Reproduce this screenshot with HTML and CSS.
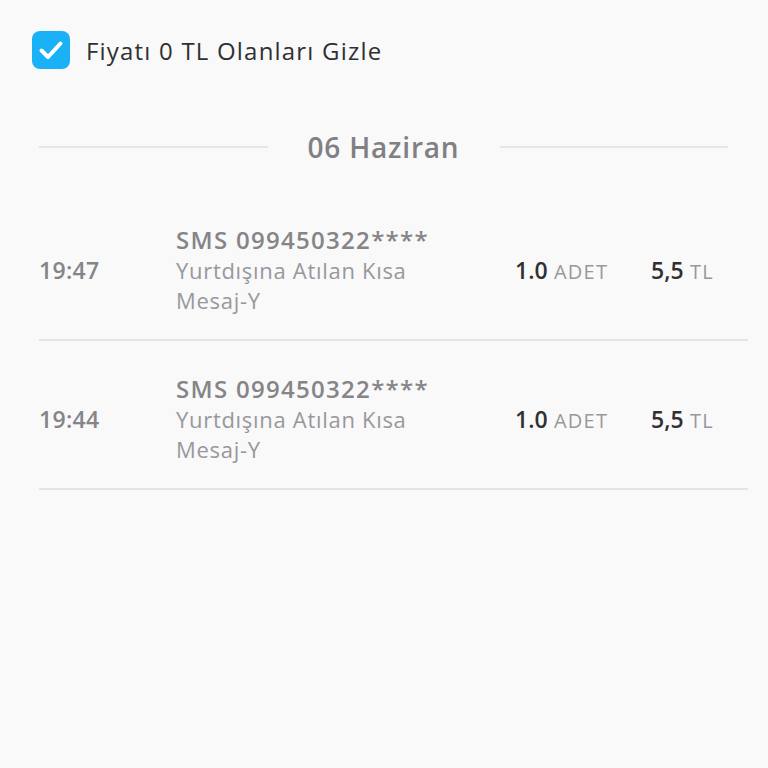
FILE: index.html
```html
<!DOCTYPE html>
<html lang="tr">
<head>
<meta charset="utf-8">
<link rel="stylesheet" href="styles.css">
</head>
<body>
<div class="page">
  <label class="filter">
    <span class="checkbox">
      <svg width="38" height="38" viewBox="0 0 38 38"><rect x="0" y="0" width="38" height="38" rx="8" fill="#1bb1f6"/><path d="M9.5 19.5 L16 26 L28.5 12.5" fill="none" stroke="#fff" stroke-width="4" stroke-linecap="round" stroke-linejoin="round"/></svg>
    </span>
    <span class="filter-text">Fiyatı 0 TL Olanları Gizle</span>
  </label>

  <div class="date-sep">
    <span class="line"></span>
    <span class="date">06 Haziran</span>
    <span class="line"></span>
  </div>

  <div class="list">
    <div class="row">
      <div class="time">19:47</div>
      <div class="desc">
        <div class="title">SMS 099450322****</div>
        <div class="sub">Yurtdışına Atılan Kısa Mesaj-Y</div>
      </div>
      <div class="qty"><b>1.0</b> ADET</div>
      <div class="price"><b>5,5</b> TL</div>
    </div>
    <div class="row">
      <div class="time">19:44</div>
      <div class="desc">
        <div class="title">SMS 099450322****</div>
        <div class="sub">Yurtdışına Atılan Kısa Mesaj-Y</div>
      </div>
      <div class="qty"><b>1.0</b> ADET</div>
      <div class="price"><b>5,5</b> TL</div>
    </div>
  </div>
</div>
</body>
</html>
```

FILE: styles.css
```css
html, body {
  margin: 0;
  padding: 0;
  background: #f9f9fa;
}
body {
  font-family: "Open Sans", "Noto Sans", sans-serif;
  width: 768px;
  height: 768px;
  overflow: hidden;
}
.page {
  padding: 31px 20px 0 39px;
}
.filter {
  display: flex;
  align-items: center;
  gap: 16px;
  margin-left: -7px;
  height: 38px;
}
.checkbox {
  display: block;
  width: 38px;
  height: 38px;
}
.checkbox svg { display: block; }
.filter-text {
  font-size: 24px;
  color: #2f3033;
  letter-spacing: 1.2px;
}
.date-sep {
  display: flex;
  align-items: center;
  margin-top: 58px;
  width: 689px;
  height: 40px;
}
.date-sep .line {
  flex: 1;
  height: 2px;
  background: #e6e6e8;
}
.date-sep .date {
  width: 232px;
  text-align: center;
  font-size: 28px;
  font-weight: 600;
  color: #808083;
  letter-spacing: 0.8px;
}
.list {
  margin-top: 25px;
  width: 709px;
}
.row {
  display: grid;
  grid-template-columns: 137px 339px 136px auto;
  align-items: center;
  padding: 32px 0 24px;
  border-bottom: 2px solid #e4e4e6;
}
.time {
  font-size: 23px;
  font-weight: 600;
  color: #858588;
  letter-spacing: 0.3px;
}
.title {
  font-size: 24px;
  font-weight: 600;
  color: #858588;
  line-height: 31px;
  letter-spacing: 1.3px;
}
.sub {
  font-size: 22px;
  color: #98989b;
  line-height: 30px;
  width: 250px;
  letter-spacing: 0.7px;
}
.qty, .price {
  font-size: 20px;
  color: #98989b;
  letter-spacing: 1.2px;
}
.qty b, .price b {
  font-size: 23px;
  font-weight: 600;
  color: #303033;
  letter-spacing: 0;
}
```
